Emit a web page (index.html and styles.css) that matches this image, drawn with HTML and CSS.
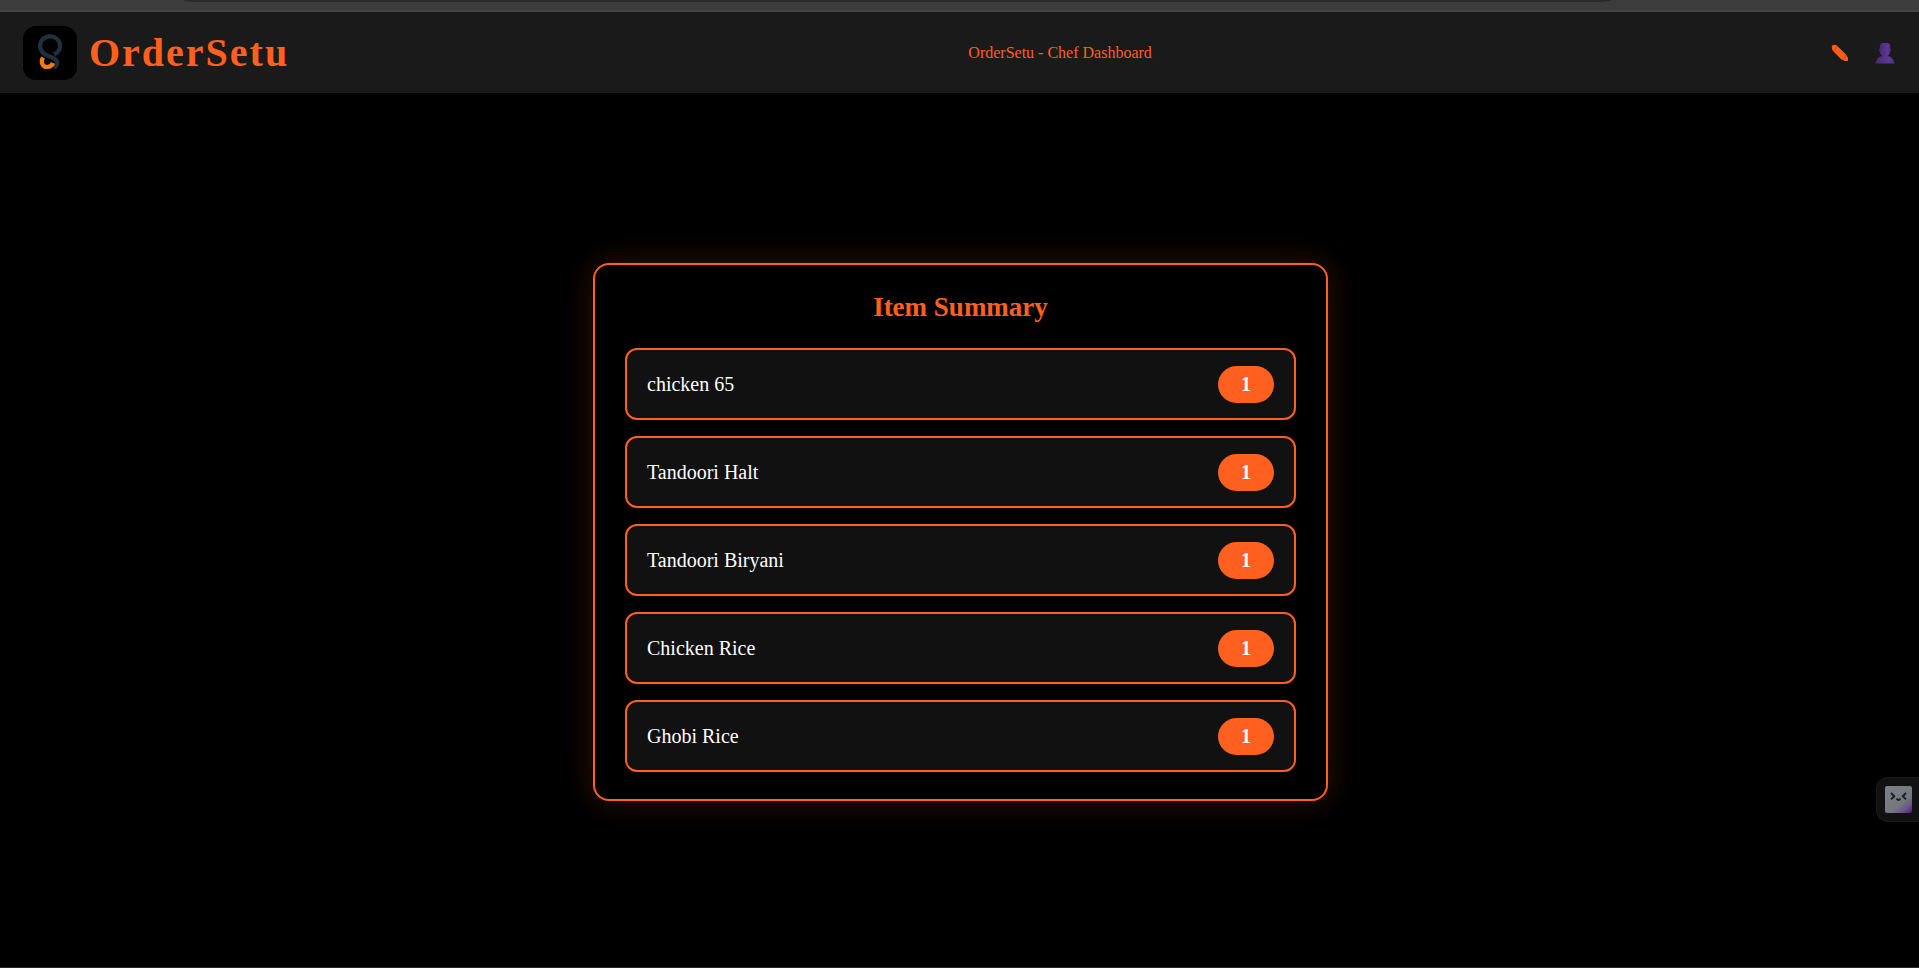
FILE: index.html
```
<!DOCTYPE html>
<html lang="en">
<head>
<meta charset="utf-8">
<title>OrderSetu - Chef Dashboard</title>
<link rel="stylesheet" href="styles.css">
</head>
<body>
<div class="toolbar"><div class="toolbar-field"></div></div>
<header class="header">
  <div class="brand">
    <svg class="logo" viewBox="0 0 54 54" aria-hidden="true">
      <rect width="54" height="54" rx="13" fill="#000"/>
      <g fill="none" stroke-width="4.200">
        <path d="M31 28.500C35 26.500 37 24 37 20.500A10 9.500 0 1 0 17.300 22C18 25.500 20.500 27.700 24 29.300L29 31.500C35 34 36 37.500 31 42" stroke="#202f3e"/>
        <path d="M20 31.500C17 36.500 20 41.300 24.500 41C27.500 40.800 29.300 39 30 37" stroke="#f57c0c"/>
      </g>
    </svg>
    <span class="brand-name">OrderSetu</span>
  </div>
  <div class="page-name">OrderSetu - Chef Dashboard</div>
  <nav class="actions">
    <button class="action" type="button" aria-label="Edit">
      <svg width="18" height="18" viewBox="0 0 18 18" aria-hidden="true">
        <path d="M1 4Q.2 2 1.700 1.200Q4 0 5.800 1.500L15 10.600L17 14V17H14L10.500 15.600L2 7Q.8 5.500 1 4Z" fill="#ff5c1c"/>
        <path d="M2 7Q5 6 5.800 1.700M11.500 15.500Q14.500 14.500 15 11" fill="none" stroke="#b53b16" stroke-width=".6"/>
      </svg>
    </button>
    <button class="action" type="button" aria-label="Profile">
      <svg width="20" height="22" viewBox="0 0 20 22" aria-hidden="true">
        <defs><linearGradient id="person" x1="0" x2="1"><stop stop-color="#472870"/><stop offset=".7" stop-color="#5b3894"/><stop offset="1" stop-color="#4f2f80"/></linearGradient></defs>
        <path d="M5 3Q5.500 1 8 1H12.500Q15 1 15.200 4V6.500Q16.200 7 15.800 8.500Q15.600 9.800 15 10Q14.500 14 11.500 14.200H8.500Q5.500 14 5 10Q4.400 9.800 4.200 8.500Q3.800 7 4.800 6.500Z" fill="url(#person)"/>
        <path d="M.5 21.500Q1.500 14.200 8 14H12Q18.500 14.200 19.500 21.500Z" fill="url(#person)"/>
      </svg>
    </button>
  </nav>
</header>
<main class="main">
  <section class="card">
    <h1 class="card-title">Item Summary</h1>
    <ul class="items">
      <li class="item"><span>chicken 65</span><span class="count">1</span></li>
      <li class="item"><span>Tandoori Halt</span><span class="count">1</span></li>
      <li class="item"><span>Tandoori Biryani</span><span class="count">1</span></li>
      <li class="item"><span>Chicken Rice</span><span class="count">1</span></li>
      <li class="item"><span>Ghobi Rice</span><span class="count">1</span></li>
    </ul>
  </section>
</main>
<button class="assistant" type="button" aria-label="Assistant">
  <svg width="27" height="27" viewBox="0 0 27 27" aria-hidden="true">
    <defs><linearGradient id="face" x1=".15" y1="0" x2="1" y2="1"><stop offset="0" stop-color="#7c7f86"/><stop offset=".6" stop-color="#77777f"/><stop offset=".8" stop-color="#6a5583"/><stop offset="1" stop-color="#4b1686"/></linearGradient></defs>
    <rect width="27" height="27" rx="2" fill="url(#face)"/>
    <path d="M6 7L9.200 10.200L6 13.400M21 7L17.800 10.200L21 13.400M11.500 12.500Q13.500 15.500 15.500 12.500" fill="none" stroke="#1c1f2b" stroke-width="2"/>
  </svg>
</button>
</body>
</html>
```
FILE: styles.css
```
* { box-sizing: border-box; }

body {
  margin: 0;
  min-height: 100vh;
  display: flex;
  flex-direction: column;
  background: #000;
  color: #fff;
  font-family: "Liberation Serif", "Times New Roman", serif;
  border-bottom: 1px solid #2a2a2a;
}

.toolbar {
  height: 12px;
  padding: 0 308px 0 184px;
  background: #3c3c3c;
  border-bottom: 2px solid #444;
}

.toolbar-field {
  height: 2px;
  background: #282828;
  border-radius: 0 0 16px 16px / 0 0 2px 2px;
}

.header {
  display: flex;
  align-items: center;
  justify-content: space-between;
  padding: 14px 24px 13px 23px;
  background: #1a1a1a;
  color: #ff5f1f;
}

.brand {
  display: flex;
  align-items: center;
  gap: 12px;
}

.logo {
  width: 54px;
  height: 54px;
}

.brand-name {
  font-size: 40px;
  line-height: 46px;
  font-weight: bold;
  letter-spacing: 2px;
}

.page-name {
  font-size: 16px;
}

.actions {
  display: flex;
  align-items: center;
  gap: 26px;
}

.action {
  display: flex;
  padding: 0;
  border: 0;
  background: none;
}

.main {
  flex: 1;
  display: flex;
  align-items: center;
  justify-content: center;
  padding: 4px 15px 0 17px;
}

.card {
  width: 100%;
  max-width: 735px;
  padding: 26px 30px 27px;
  border: 2px solid #ff5f1f;
  border-radius: 16px;
  background: #000;
  box-shadow: 0 0 30px rgba(255, 95, 31, 0.2);
}

.card-title {
  margin: 0 0 25px;
  color: #ff5f1f;
  font-size: 27px;
  line-height: 32px;
  text-align: center;
}

.items {
  display: flex;
  flex-direction: column;
  gap: 16px;
  margin: 0;
  padding: 0;
  list-style: none;
}

.item {
  display: flex;
  align-items: center;
  justify-content: space-between;
  min-height: 72px;
  padding: 15px 20px;
  border: 2px solid #ff5f1f;
  border-radius: 12px;
  background: #111;
  font-size: 20px;
  line-height: 23px;
}

.count {
  padding: 7px 23px;
  border-radius: 20px;
  background: #ff5f1f;
  font-weight: bold;
}

.assistant {
  position: fixed;
  right: 0;
  bottom: 146px;
  display: flex;
  padding: 8px 7px 8px 8px;
  border: 1px solid #1a1a1a;
  border-right: 0;
  border-radius: 12px 0 0 12px;
  background: #111;
}
```
